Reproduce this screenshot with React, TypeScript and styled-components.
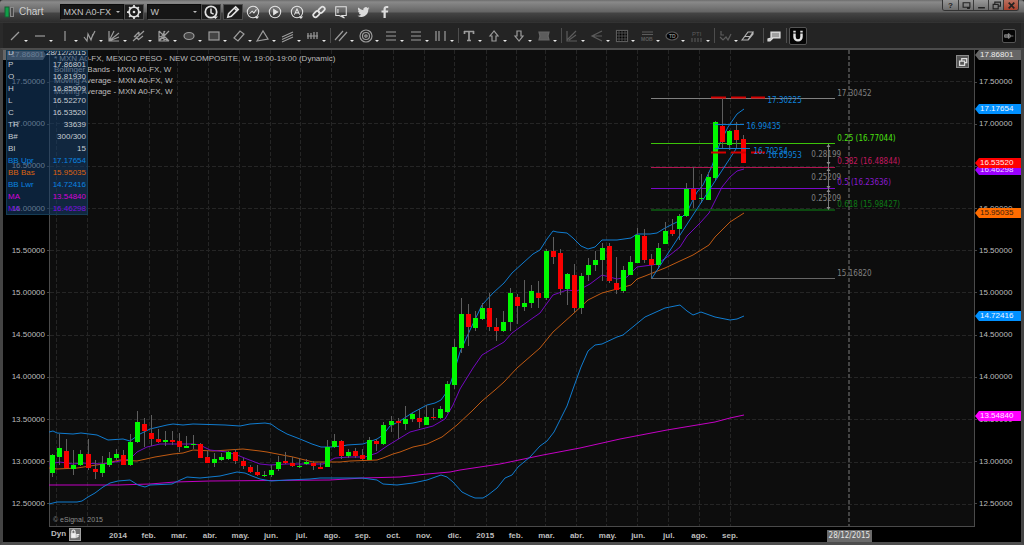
import React from 'react';
import styled, { createGlobalStyle, css } from 'styled-components';

const Global = createGlobalStyle`
  * { box-sizing: border-box; }
  body {
    margin: 0;
    background: #000;
    font-family: "Liberation Sans", Arial, sans-serif;
    font-size: 8px;
    color: #bcbcbc;
  }
  button, select { font: inherit; color: inherit; margin: 0; padding: 0; border: 0; background: none; }
  svg { display: block; }
`;

const NUM_FONT = '"DejaVu Sans Condensed", "Noto Sans", sans-serif';

/* ---------- frame ---------- */

const Window = styled.div`
  display: flex;
  flex-direction: column;
  min-height: 100vh;
  background: #2a2a2a;
`;

const TitleBar = styled.header`
  display: flex;
  align-items: center;
  height: 23px;
  padding-left: 4px;
  border-radius: 3px 3px 0 0;
  background: linear-gradient(#6c6c6c 0, #898989 2px, #646464 12px, #444 13px, #2d2d2d 22px, #383838 23px);
`;

const Title = styled.h1`
  margin: 0 17px 0 5px;
  font-size: 10px;
  font-weight: normal;
  color: #cfcfcf;
`;

const Combo = styled.label<{ $width: number }>`
  display: flex;
  align-items: center;
  width: ${(p) => p.$width}px;
  height: 16px;
  padding-right: 3px;
  background: #161616;
  border: 1px solid #0c0c0c;
  border-bottom-color: #555;
`;

const ComboSelect = styled.select`
  flex: 1;
  min-width: 0;
  height: 14px;
  padding-left: 2px;
  appearance: none;
  font-size: 9px;
  color: #c4c4c4;
`;

const BarButton = styled.button<{ $boxed?: boolean; $gap?: number }>`
  display: flex;
  align-items: center;
  justify-content: center;
  width: 20px;
  height: 16px;
  margin-right: ${(p) => p.$gap ?? 0}px;
  color: #e2e2e2;
  ${(p) =>
    p.$boxed &&
    css`
      background: #1c1c1c;
      border: 1px solid #4c4c4c;
    `}
`;

const LinkRow = styled.nav`
  display: flex;
  gap: 2px;
`;

const WindowButtons = styled.div`
  display: flex;
  align-self: flex-start;
  margin: 0 5px 0 auto;
  border: 1px solid #333;
  border-top: 0;
  border-radius: 0 0 3px 3px;
  overflow: hidden;
`;

const WindowButton = styled.button<{ $close?: boolean }>`
  display: flex;
  align-items: center;
  justify-content: center;
  width: 15px;
  height: 10px;
  background: ${(p) => (p.$close ? 'linear-gradient(#b8705f, #a8402c)' : 'linear-gradient(#989898, #6d6d6d)')};
  color: #222;
  & + & { border-left: 1px solid #3a3a3a; }
`;

const ToolBar = styled.div`
  display: flex;
  align-items: center;
  height: 25px;
  margin: 0 3px;
  padding: 0 5px 0 4px;
  background: #242424;
`;

const ToolGroup = styled.div<{ $width: number }>`
  display: grid;
  grid-auto-flow: column;
  grid-auto-columns: 1fr;
  width: ${(p) => p.$width}px;
`;

const Tool = styled.button<{ $dim?: boolean }>`
  display: flex;
  align-items: center;
  height: 20px;
  color: ${(p) => (p.$dim ? '#5c5c5c' : '#9c9c9c')};
`;

const Caret = styled.span`
  align-self: flex-end;
  margin: 0 0 4px 1px;
  border: 2px solid transparent;
  border-top-color: #e8e8e8;
  border-bottom: 0;
`;

const ComboCaret = styled(Caret)`
  align-self: center;
  margin: 0;
  border-top-color: #bdbdbd;
`;

const Separator = styled.span`
  width: 1px;
  height: 15px;
  margin-right: 2px;
  background: #4d4d4d;
`;

const BoxTool = styled.button<{ $size: number; $push?: boolean }>`
  display: flex;
  align-items: center;
  justify-content: center;
  width: ${(p) => p.$size}px;
  height: ${(p) => p.$size}px;
  background: #050505;
  border: 1px solid #555;
  border-radius: 2px;
  color: #e4e4e4;
  ${(p) => p.$push && 'margin-left: auto;'}
`;

/* ---------- chart ---------- */

const ChartArea = styled.main`
  position: relative;
  flex: 1;
  display: grid;
  grid-template-columns: 46px 1fr 46px;
  grid-template-rows: 1fr 15px;
  border: 3px solid #444;
  border-top: 2px solid #4c4c4c;
  border-bottom-color: #4e4e4e;
  background: #000;
`;

const PriceAxis = styled.div<{ $side: 'left' | 'right' }>`
  position: relative;
  display: flex;
  flex-direction: column;
  justify-content: space-between;
  padding: 27px 0 18px;
  line-height: 10px;
  text-align: ${(p) => (p.$side === 'left' ? 'right' : 'left')};
`;

const PriceTick = styled.span<{ $side: 'left' | 'right' }>`
  padding: 0 4px;
  background: linear-gradient(#444, #444) ${(p) => (p.$side === 'left' ? 'right' : 'left')} center / 2px 1px no-repeat;
`;

const Marker = styled.span<{ $y: number; $fill: string; $ink: string; $side?: 'left' }>`
  position: absolute;
  top: ${(p) => ((p.$y - 50) / 477) * 100}%;
  left: 0;
  right: ${(p) => (p.$side ? 3 : 0)}px;
  margin-top: -5px;
  padding: ${(p) => (p.$side ? '0 2px' : '0 5px')};
  background: ${(p) => p.$fill};
  color: ${(p) => p.$ink};
  clip-path: ${(p) =>
    p.$side
      ? 'polygon(0 0, calc(100% - 3px) 0, 100% 50%, calc(100% - 3px) 100%, 0 100%)'
      : 'polygon(0 50%, 4px 0, 100% 0, 100% 100%, 4px 100%)'};
`;

const Plot = styled.section`
  position: relative;
  background: #0d0d0d;
  border: solid #4a4a4a;
  border-width: 0 1px 1px;
`;

const PlotSvg = styled.svg`
  position: absolute;
  inset: 0 -1px -1px;
  width: calc(100% + 2px);
  height: calc(100% + 1px);
  & * { vector-effect: non-scaling-stroke; }
`;

const Studies = styled.ul`
  position: relative;
  margin: 0;
  padding: 3px 0 0 4px;
  list-style: none;
  line-height: 11px;
`;

const Copyright = styled.small`
  position: absolute;
  left: 3px;
  bottom: 2px;
  font-size: 7px;
  line-height: 8px;
  color: #8c8c8c;
`;

const RestoreButton = styled.button`
  position: absolute;
  top: 5px;
  right: 5px;
  display: flex;
  align-items: center;
  justify-content: center;
  width: 13px;
  height: 13px;
  background: #555;
  border: 1px solid #8a8a8a;
  color: #ddd;
`;

const Note = styled.span<{ $x: number; $y: number; $ink: string }>`
  position: absolute;
  left: ${(p) => ((p.$x - 49) / 926) * 100}%;
  top: ${(p) => ((p.$y - 50) / 477) * 100}%;
  margin-top: -5px;
  font: 8px/10px ${NUM_FONT};
  color: ${(p) => p.$ink};
  white-space: nowrap;
`;

const DataWindow = styled.table`
  position: absolute;
  left: 3px;
  top: 0;
  width: 82px;
  border-collapse: collapse;
  background: rgba(21, 62, 105, 0.55);
  outline: 1px solid #153c55;
  outline-offset: -1px;
  line-height: 12px;
`;

const DataRow = styled.tr<{ $ink?: string }>`
  color: ${(p) => p.$ink ?? '#c6ccd2'};
  th { padding: 0 0 0 2px; font-weight: normal; text-align: left; }
  td { padding: 0 2px 0 0; text-align: right; }
  &:first-child { line-height: 6px; }
  &:first-child > * { padding-bottom: 3px; }
`;

const TimeAxis = styled.div`
  position: relative;
  grid-column: 2;
  font-weight: bold;
  line-height: 18px;
`;

const Months = styled.ol`
  display: grid;
  grid-template-columns: repeat(21, 1fr);
  margin: 0 24.8% 0 5.8%;
  padding: 0;
  list-style: none;
  text-align: center;
`;

const Mode = styled.div`
  position: absolute;
  left: 2px;
  top: 0;
  display: flex;
  align-items: center;
  gap: 3px;
  line-height: 14px;
`;

const LockButton = styled.button`
  display: flex;
  align-items: center;
  justify-content: center;
  width: 12px;
  height: 13px;
  background: #6f6f6f;
  border: 1px solid #a0a0a0;
  color: #f0f0f0;
`;

const DateTag = styled.time`
  position: absolute;
  left: 84%;
  top: 3px;
  width: 45px;
  background: #6a6a6a;
  color: #e6e6e6;
  font: 8px/12px ${NUM_FONT};
  text-align: center;
`;

/* ---------- data ---------- */

type Candle = [number, number, number, number, 0 | 1];
// high, body top, body bottom, low, rising
const candles: Candle[] = [
  [454, 455, 473, 477, 1], [434, 448, 457, 465, 1], [439, 451, 468, 468, 0], [450, 465, 469, 475, 1],
  [450, 454, 465, 466, 1], [439, 454, 468, 470, 0], [460, 469, 472, 479, 0], [456, 464, 473, 477, 1],
  [452, 458, 465, 467, 1], [449, 454, 458, 460, 1], [450, 455, 465, 465, 0], [434, 442, 465, 466, 1],
  [411, 422, 442, 443, 1], [418, 424, 431, 447, 0], [415, 433, 439, 446, 0], [429, 439, 442, 443, 0],
  [431, 440, 442, 446, 1], [431, 440, 442, 445, 0], [433, 441, 447, 452, 0], [436, 446, 448, 448, 1],
  [435, 444, 445, 449, 1], [443, 444, 458, 458, 0], [451, 457, 463, 463, 0], [453, 459, 463, 467, 1],
  [453, 457, 460, 461, 1], [451, 452, 459, 460, 1], [449, 452, 461, 464, 0], [458, 461, 466, 469, 0],
  [465, 467, 472, 473, 0], [465, 472, 475, 476, 0], [471, 475, 476, 477, 1], [465, 470, 475, 477, 1],
  [456, 462, 469, 471, 1], [452, 461, 463, 464, 0], [457, 463, 466, 467, 0], [458, 466, 467, 468, 1],
  [459, 462, 464, 465, 1], [461, 463, 466, 470, 0], [463, 467, 469, 469, 0], [440, 447, 467, 467, 1],
  [434, 441, 447, 448, 1], [440, 441, 456, 459, 0], [449, 452, 456, 458, 1], [448, 451, 456, 458, 0],
  [449, 455, 459, 460, 0], [437, 440, 460, 460, 1], [439, 441, 444, 451, 0], [422, 425, 444, 445, 1],
  [416, 421, 425, 432, 1], [418, 421, 423, 439, 0], [406, 419, 424, 430, 1], [413, 414, 419, 422, 1],
  [409, 418, 422, 428, 0], [405, 417, 425, 425, 1], [408, 417, 418, 420, 0], [406, 409, 418, 419, 1],
  [381, 384, 412, 413, 1], [339, 347, 385, 389, 1], [298, 314, 348, 353, 1], [304, 314, 327, 346, 0],
  [311, 318, 328, 331, 1], [303, 308, 319, 320, 1], [293, 308, 327, 331, 0], [318, 327, 331, 341, 0],
  [311, 322, 331, 332, 1], [288, 293, 322, 331, 1], [294, 297, 306, 324, 0], [280, 303, 307, 311, 1],
  [285, 291, 303, 308, 1], [281, 293, 298, 308, 0], [249, 251, 298, 300, 1], [237, 251, 257, 264, 0],
  [249, 253, 289, 295, 0], [273, 274, 289, 305, 1], [264, 275, 308, 312, 0], [273, 276, 308, 314, 1],
  [258, 265, 275, 281, 1], [251, 260, 265, 271, 1], [243, 248, 260, 281, 1], [243, 246, 281, 283, 0],
  [257, 283, 290, 294, 0], [266, 270, 291, 293, 1], [256, 262, 275, 275, 1], [228, 235, 263, 263, 1],
  [229, 236, 260, 263, 0], [254, 259, 265, 278, 0], [243, 248, 265, 269, 1], [222, 231, 244, 244, 1],
  [219, 230, 234, 236, 0], [214, 216, 229, 240, 1], [183, 189, 216, 217, 1], [167, 189, 200, 208, 0],
  [174, 198, 199, 203, 1], [172, 177, 200, 200, 1], [121, 122, 178, 180, 1], [98, 126, 142, 148, 0],
  [130, 131, 145, 150, 1], [122, 130, 140, 149, 0], [135, 139, 163, 163, 0],
];

const upperBand =
  '49,432 53,431 57,433 73,434 81,433 89,434 97,435 108,440 123,439 130,441 140,434 150,429 167,425 173,424 183,425 193,424 225,425 240,426 250,424 265,423 271,424 278,429 287,434 300,439 312,444 321,447 330,447 342,446 347,445 363,444 377,439 383,435 390,426 400,421 412,413 427,405 435,403 441,400 446,393 451,382 460,352 470,330 482,305 493,293 504,283 512,273 523,263 533,254 540,250 547,239 553,231 557,232 567,233 573,238 581,246 588,249 595,247 602,240 617,240 631,238 637,234 650,234 657,233 665,228 677,222 687,212 697,192 703,185 712,166 720,143 728,127 737,114 744,109';
const lowerBand =
  '49,504 57,502 77,502 82,501 88,497 95,493 103,487 110,483 118,481 130,480 138,485 145,487 150,485 172,484 178,481 187,477 200,478 220,476 237,472 245,473 252,476 260,479 271,481 287,480 310,479 320,478 362,478 377,480 383,484 397,485 413,483 427,480 441,475 447,477 453,482 462,492 470,496 475,498 483,498 488,495 497,488 505,478 512,475 518,467 530,457 540,446 547,441 554,432 567,406 573,389 581,367 588,351 595,345 602,344 617,337 623,335 645,317 665,308 680,305 687,311 693,315 701,312 715,317 730,320 737,319 744,316';
const basis =
  '49,468 57,469 77,468 90,466 103,464 120,460 137,461 155,457 173,454 183,453 193,450 213,451 243,449 260,451 267,452 293,457 313,462 340,462 350,461 377,460 383,458 393,454 400,452 413,447 427,444 442,437 457,425 472,411 482,401 495,390 504,382 517,368 540,348 553,332 573,314 588,300 602,293 617,289 631,285 637,279 645,276 655,272 665,268 680,261 693,255 709,245 715,237 730,222 744,213';
const fastAverage =
  '49,464 60,462 73,464 82,463 103,464 115,462 120,461 130,459 137,452 147,447 160,444 193,444 200,445 210,450 227,452 237,455 247,459 260,464 270,465 287,464 323,464 335,458 350,457 365,457 377,453 387,446 410,432 433,426 445,419 453,405 460,389 473,368 482,355 504,342 512,333 530,320 540,313 553,295 567,290 577,291 590,284 602,275 617,279 627,277 637,267 652,265 657,264 670,255 680,247 687,236 700,223 709,213 722,187 730,177 737,171 744,169';
const slowAverage =
  '49,485 118,485 150,484 175,482 210,481 330,480 363,478 400,477 427,474 450,472 460,470 480,467 500,464 543,455 580,448 620,439 667,430 715,422 730,418 744,415';

const priceLines = [81.5, 123.5, 166.5, 208.5, 250.5, 292.5, 335.5, 377.5, 419.5, 462.5, 504.5];
const monthLines = [56, 87, 118, 149, 177, 208, 239, 270, 300, 331, 363, 393, 424, 454, 486, 516, 545, 576, 606, 637, 668, 699, 730];

const prices = ['17.50000', '17.00000', '16.50000', '16.00000', '15.50000', '15.00000', '14.50000', '14.00000', '13.50000', '13.00000', '12.50000'];
const months = ['2014', 'feb.', 'mar.', 'abr.', 'may.', 'jun.', 'jul.', 'ago.', 'sep.', 'oct.', 'nov.', 'dic.', '2015', 'feb.', 'mar.', 'abr.', 'may.', 'jun.', 'jul.', 'ago.', 'sep.'];

const markers: [number, string, string, string][] = [
  [55, '17.86801', '#666', '#eee'],
  [109, '17.17654', '#0090ff', '#eef6ff'],
  [170, '16.46298', '#9a00ff', '#f0dcff'],
  [163, '16.53520', '#ff0000', '#ffecec'],
  [213, '15.95035', '#ff6c00', '#40200a'],
  [316, '14.72416', '#0090ff', '#eef6ff'],
  [416, '13.54840', '#ff00ff', '#ffe8ff'],
];

const notes: [number, number, string, string][] = [
  [838, 94, '17.30452', '#808080'],
  [768, 101, '17.30225', '#0c82dc'],
  [747, 127, '16.99435', '#0c82dc'],
  [754, 152, '16.70254', '#0c82dc'],
  [768, 156, '16.65953', '#0c82dc'],
  [838, 139, '0.25 (16.77044)', '#4ae010'],
  [812, 155, '0.28199', '#808080'],
  [838, 162, '0.382 (16.48844)', '#c2185f'],
  [812, 178, '0.25209', '#808080'],
  [838, 183, '0.5 (16.23636)', '#8a1ad0'],
  [812, 199, '0.25209', '#808080'],
  [838, 205, '0.618 (15.98427)', '#0e7a16'],
  [838, 274, '15.16820', '#808080'],
];

const readings: [string, string, string?][] = [
  ['D', '28/12/2015'], ['P', '17.86801'], ['O', '16.81930'], ['H', '16.85909'], ['L', '16.52270'],
  ['C', '16.53520'], ['TR', '33639'], ['B#', '300/300'], ['BI', '15'],
  ['BB Upr', '17.17654', '#0a84e0'], ['BB Bas', '15.95035', '#dc6210'], ['BB Lwr', '14.72416', '#0a84e0'],
  ['MA', '13.54840', '#d400d8'], ['MA', '16.46298', '#7e0ce0'],
];

/* ---------- icons ---------- */

const Icon = ({ size = 16, children }: { size?: number; children: React.ReactNode }) => (
  <svg width={size} height={size} viewBox="0 0 16 16" fill="none" stroke="currentColor" strokeWidth="1.2" aria-hidden="true">
    {children}
  </svg>
);

type ToolDef = [string, React.ReactNode, boolean?, boolean?];

const drawTools: ToolDef[] = [
  ['Line', <path d="M4 12 12 4" />],
  ['Horizontal line', <path d="M3 8h10" />],
  ['Vertical line', <path d="M8 3v10" />],
  ['Polyline', <path d="M2 9l3 4 1-7 3 6 2-6M9 11l4-8" />],
  ['Fan', <path d="M3 3v10h10M3 13 8 3M3 13 13 5M3 13l10-4" />],
  ['Pitchfork', <path d="M2 13 13 3M4 8l4-4M7 12l5-4M4 8l4 4M8 4v4M3 9l4-4" />],
  ['Gann', <path d="M3 3l10 10M8 3v10M13 3 3 13M3 3v10h10M3 8l10 5M3 13l6-10" />],
  ['Ellipse', <ellipse cx="8" cy="8" rx="5" ry="3.5" fill="#444" />],
  ['Rectangle', <rect x="3" y="4" width="10" height="8" fill="#444" />],
  ['Rotated rectangle', <path d="M3 10l6-7 4 3-6 7z" />],
  ['Triangle', <path d="M2 13 8 3l5 8z" />],
  ['Channel', <path d="M2 9l11-5M2 11.500l11-5M2 14l11-5" />],
  ['Time cycles', <path d="M2 8h11M3 5v6M6 5v6M9 4v7M12 4v7" />],
];

const levelTools: ToolDef[] = [
  ['Parallel lines', <path d="M2 12 10 3M6 13l8-9" />],
  ['Circles', <><circle cx="8" cy="8" r="6" /><circle cx="8" cy="8" r="3.500" /><circle cx="8" cy="8" r="1.200" /></>],
  ['Retracement', <path d="M3 4h10M3 8h10M3 12h10" />],
  ['Extension', <path d="M3 4h10M3 8h10M3 12h10" />],
  ['Time zones', <path d="M3 3v10M6 3v10M12 3v10" />],
];

const markTools: ToolDef[] = [
  ['Text', <path d="M3 3.500h10M3.500 3v3M12.500 3v3M8 3v10M6 12.500h4" strokeWidth="1.700" />],
  ['Arrow up', <path d="M8 3 4 8h2v5h4V8h2z" />],
  ['Arrow down', <path d="M8 13 4 8h2V3h4v5h2z" />],
  ['Bitmap', <path d="M3 4h10l-1 4 1 4H3l1-4z" stroke="#666" fill="#5c5c5c" />],
];

const advancedTools: ToolDef[] = [
  ['Regression', <path d="M3 3v10h10M3 12l9-9M5 12l7-5" />, true],
  ['Speed lines', <path d="M13 3 3 8l10 5M3 8h10" />, true],
  ['Grid', <><rect x="2.500" y="2.500" width="11" height="11" fill="#000" /><path d="M5 2v12M8 2v12M11 2v12M2 5h12M2 8h12M2 11h12" strokeWidth=".8" /></>, true],
  ['MOB', <><path d="M3 4h11M3 6.500h11" /><text x="2" y="13" fontSize="5" fontWeight="bold" fill="currentColor" stroke="none">MOB</text></>, true],
  ['TD', <><ellipse cx="8" cy="8" rx="6" ry="4" fill="#000" /><text x="5" y="10" fontSize="5" fontWeight="bold" fill="#888" stroke="none">TD</text></>, true],
  ['PTI', <><text x="3" y="8" fontSize="6" fill="currentColor" stroke="none">PTI</text><path d="M2 11h12M2 13h12" strokeDasharray="2 1" /></>, true],
];

const editTools: ToolDef[] = [
  ['Wave labels', <path d="M4 3v4h3M3 9l3 3 3-3 2 3 3-6" />, true],
  ['Eraser', <path d="M2 12l6-8h5l-5 8zM5 8.500h5M8 12l5-6V4" stroke="#b4b4b4" />, false, true],
];

const renderTools = (tools: ToolDef[]) =>
  tools.map(([label, art, dim, plain]) => (
    <Tool key={label} aria-label={label} $dim={dim}>
      <Icon>{art}</Icon>
      {!plain && <Caret />}
    </Tool>
  ));

const linkIcons: [string, React.ReactNode][] = [
  ['Studies', <><circle cx="8" cy="8" r="6.500" /><path d="M4 10l3-3 2 2 3-4" /><path d="M10 13h5l-2.500 3z" fill="currentColor" stroke="none" /></>],
  ['Playback', <><circle cx="8" cy="8" r="6.500" /><path d="M6.500 5v6L11 8z" fill="currentColor" /></>],
  ['Alerts', <><circle cx="8" cy="8" r="6.500" /><path d="M5 11l3-6.500L11 11M6 9h4" /><path d="M10 13h5l-2.500 3z" fill="currentColor" stroke="none" /></>],
  ['Link', <g strokeWidth="2"><rect x="1" y="8" width="8" height="5" rx="2.500" transform="rotate(-45 5 10.500)" /><rect x="7" y="3" width="8" height="5" rx="2.500" transform="rotate(-45 11 5.500)" /></g>],
  ['Comment', <path d="M2 2h12v10H9l3 3-6-3H2zM4.500 4.500v5" />],
];

const RestoreArt = () => (
  <Icon size={10}>
    <path d="M6 6V2.500h8V9h-3M2.500 6.500h8v7h-8z" strokeWidth="2" />
  </Icon>
);

/* ---------- app ---------- */

export default function App() {
  return (
    <Window>
      <Global />
      <TitleBar>
        <svg width="10" height="12" viewBox="0 0 10 12" aria-hidden="true">
          <rect x="1" y="1" width="4" height="10" fill="#0fa048" stroke="#1c5a34" />
          <rect x="6.500" y="1.500" width="3" height="9" fill="#4a4a4a" stroke="#8a8a8a" />
        </svg>
        <Title>Chart</Title>
        <Combo $width={64}>
          <ComboSelect aria-label="Symbol" defaultValue="MXN A0-FX"><option>MXN A0-FX</option></ComboSelect>
          <ComboCaret />
        </Combo>
        <BarButton $boxed $gap={3} aria-label="Settings">
          <Icon size={14}>
            <circle cx="8" cy="8" r="5.500" strokeWidth="2" />
            <circle cx="8" cy="8" r="1.500" fill="currentColor" stroke="none" />
            <path d="M8 0v3M8 13v3M0 8h3M13 8h3M2.500 2.500l2 2M11.500 11.500l2 2M2.500 13.500l2-2M13.500 2.500l-2 2" strokeWidth="2" />
          </Icon>
        </BarButton>
        <Combo $width={54}>
          <ComboSelect aria-label="Interval" defaultValue="W"><option>W</option></ComboSelect>
          <ComboCaret />
        </Combo>
        <BarButton $boxed $gap={2} aria-label="Time template">
          <Icon size={14}>
            <circle cx="8" cy="8" r="6.500" strokeWidth="2" />
            <path d="M8 4v5l3 1.500" strokeWidth="1.700" />
            <path d="M10 13h6l-3 3z" fill="currentColor" stroke="none" />
          </Icon>
        </BarButton>
        <BarButton $boxed aria-label="Draw">
          <Icon size={14}>
            <path d="M2 14l1-4L11 2l3 3-8 8zM10 4l3 3" strokeWidth="1.800" />
          </Icon>
        </BarButton>
        <LinkRow>
          {linkIcons.map(([label, art]) => (
            <BarButton key={label} aria-label={label}><Icon size={14}>{art}</Icon></BarButton>
          ))}
          <BarButton aria-label="Twitter">
            <svg width="13" height="12" viewBox="0 0 24 24" fill="#dcdcdc" aria-hidden="true">
              <path d="M24 4.600a10 10 0 0 1-2.800.8 5 5 0 0 0 2.100-2.700 10 10 0 0 1-3.100 1.200 4.900 4.900 0 0 0-8.400 4.500A14 14 0 0 1 1.700 3.200a4.900 4.900 0 0 0 1.500 6.500 5 5 0 0 1-2.200-.6 4.900 4.900 0 0 0 3.900 4.900 5 5 0 0 1-2.200.1 4.900 4.900 0 0 0 4.600 3.400A10 10 0 0 1 0 19.500 14 14 0 0 0 21.500 7a10 10 0 0 0 2.500-2.400z" />
            </svg>
          </BarButton>
          <BarButton aria-label="Facebook">
            <svg width="12" height="12" viewBox="0 0 24 24" fill="#dcdcdc" aria-hidden="true">
              <path d="M9 24V13H5V9h4V6c0-4 2.500-6 6-6h3.500v4H16c-2 0-2.500 1-2.500 2.500V9h5l-.7 4h-4.300v11z" />
            </svg>
          </BarButton>
        </LinkRow>
        <WindowButtons>
          <WindowButton aria-label="Help"><b>?</b></WindowButton>
          <WindowButton aria-label="Dock"><Icon size={9}><path d="M2 3h12v8H2zM9 13h5" strokeWidth="2" /></Icon></WindowButton>
          <WindowButton aria-label="Minimize"><Icon size={9}><path d="M2 12h12" strokeWidth="3" /></Icon></WindowButton>
          <WindowButton aria-label="Restore"><Icon size={9}><path d="M5 6V2h10v7h-3M2 6h9v8H2z" strokeWidth="2" /></Icon></WindowButton>
          <WindowButton aria-label="Close" $close><Icon size={9}><path d="M3 3l10 10M13 3 3 13" strokeWidth="3" /></Icon></WindowButton>
        </WindowButtons>
      </TitleBar>

      <ToolBar>
        <ToolGroup $width={323}>{renderTools(drawTools)}</ToolGroup>
        <Separator />
        <ToolGroup $width={125}>{renderTools(levelTools)}</ToolGroup>
        <Separator />
        <ToolGroup $width={100}>{renderTools(markTools)}</ToolGroup>
        <Separator />
        <ToolGroup $width={150}>{renderTools(advancedTools)}</ToolGroup>
        <Separator />
        <ToolGroup $width={46}>{renderTools(editTools)}</ToolGroup>
        <Separator />
        <ToolGroup $width={20}>
          <Tool aria-label="Note">
            <Icon><path d="M5 4h9v6H7l-3 3H2v-2l3-1z" fill="#c8c8c8" stroke="#ddd" /><path d="M6 6h7M6 8h7" stroke="#666" strokeWidth=".8" /></Icon>
          </Tool>
        </ToolGroup>
        <Separator />
        <BoxTool $size={18} aria-label="Magnet">
          <Icon size={14}><path d="M4 2v7a4 4 0 0 0 8 0V2" strokeWidth="2.800" /><path d="M2 4.500h4M10 4.500h4" stroke="#050505" /></Icon>
        </BoxTool>
        <BoxTool $size={14} $push aria-label="Pin">
          <Icon size={10}><path d="M1 6h6v4H1zM7 4v8l3-2V6zM10 8h5" fill="#555" stroke="#999" /></Icon>
        </BoxTool>
      </ToolBar>

      <ChartArea>
        <PriceAxis $side="left">
          {prices.map((p) => <PriceTick key={p} $side="left">{p}</PriceTick>)}
          <Marker $y={55} $fill="#666" $ink="#ccc" $side="left">17.86801</Marker>
        </PriceAxis>

        <Plot>
          <PlotSvg viewBox="49 50 926 477" preserveAspectRatio="none" role="img" aria-label="Weekly candlestick chart">
            <g stroke="#252525" strokeDasharray="4 2" shapeRendering="crispEdges">
              {priceLines.map((y) => <path key={y} d={`M50 ${y}H974`} />)}
              {monthLines.map((x) => <path key={x} d={`M${x + 0.5} 50V526`} />)}
            </g>
            <path d="M849 50V526" stroke="#444" strokeWidth="2" strokeDasharray="4 2" shapeRendering="crispEdges" />
            <g fill="none" strokeWidth="1">
              <polyline points={slowAverage} stroke="#c400c4" />
              <polyline points={basis} stroke="#c05a12" />
              <polyline points={fastAverage} stroke="#7408c0" />
              <polyline points={upperBand} stroke="#107cd0" />
              <polyline points={lowerBand} stroke="#107cd0" />
            </g>
            <g shapeRendering="crispEdges" strokeWidth="1">
              <path d="M651 98.500H835" stroke="#808080" />
              <path d="M651 278.500H835" stroke="#666" />
              <path d="M651 143.500H835" stroke="#3cc40a" />
              <path d="M651 167.500H835" stroke="#b01450" />
              <path d="M651 188.500H835" stroke="#7a08c8" />
              <path d="M651 210H835" stroke="#0c4a10" strokeWidth="2" />
            </g>
            <g shapeRendering="crispEdges">
              {candles.map(([high, top, bottom, low, up], i) => {
                const x = Math.round(52.3 + i * 7.046);
                return (
                  <g key={i}>
                    <path d={`M${x + 0.5} ${high}V${low}`} stroke="#5e5e5e" />
                    <rect x={x - 2} y={top} width="5" height={Math.max(bottom - top, 1)} fill={up ? '#00f800' : '#fa0000'} />
                  </g>
                );
              })}
            </g>
            <path d="M652 278 736 149M715 124.500h29M715 148.500h35" stroke="#107cd0" fill="none" />
            <path d="M711 97.500h54M711 152.500h54" stroke="#d40000" strokeWidth="2" strokeDasharray="15 5" />
            <g stroke="#777" fill="#8a8a8a">
              <path d="M828.500 144V209" />
              {[144, 168, 189].map((y) => <path key={y} d={`M828.500 ${y}l-2 3h4zM828.500 ${y + 21}l-2-3h4z`} stroke="none" />)}
            </g>
          </PlotSvg>
          <Studies>
            <li>* MXN A0-FX, MEXICO PESO - NEW COMPOSITE, W, 19:00-19:00 (Dynamic)</li>
            <li>Bollinger Bands - MXN A0-FX, W</li>
            <li>Moving Average - MXN A0-FX, W</li>
            <li>Moving Average - MXN A0-FX, W</li>
          </Studies>
          {notes.map(([x, y, text, ink]) => <Note key={`${x}-${y}`} $x={x} $y={y} $ink={ink}>{text}</Note>)}
          <Copyright>© eSignal, 2015</Copyright>
          <RestoreButton aria-label="Restore pane"><RestoreArt /></RestoreButton>
        </Plot>

        <PriceAxis $side="right">
          {prices.map((p) => <PriceTick key={p} $side="right">{p}</PriceTick>)}
          {markers.map(([y, text, fill, ink]) => <Marker key={text} $y={y} $fill={fill} $ink={ink}>{text}</Marker>)}
        </PriceAxis>

        <TimeAxis>
          <Mode>
            Dyn
            <LockButton aria-label="Lock scale">
              <Icon size={10}><path d="M3 7V4a2.500 2.500 0 0 1 5 0v3" strokeWidth="1.800" /><path d="M2 7h7v7H2z" fill="currentColor" /><path d="M11 14V9h4M11 11.500h3" strokeWidth="1.800" /></Icon>
            </LockButton>
          </Mode>
          <Months>{months.map((m, i) => <li key={i}>{m}</li>)}</Months>
          <DateTag>28/12/2015</DateTag>
        </TimeAxis>

        <DataWindow>
          <tbody>
            {readings.map(([name, value, ink], i) => (
              <DataRow key={i} $ink={ink}><th scope="row">{name}</th><td>{value}</td></DataRow>
            ))}
          </tbody>
        </DataWindow>
      </ChartArea>
    </Window>
  );
}
